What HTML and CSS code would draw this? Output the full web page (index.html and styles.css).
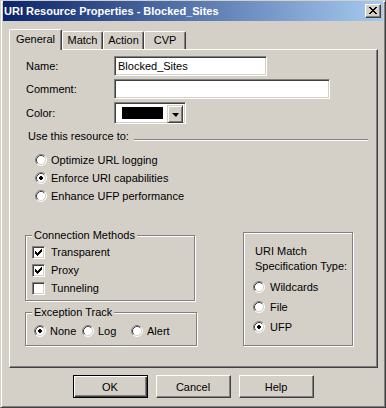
FILE: index.html
```html
<!DOCTYPE html>
<html>
<head>
<meta charset="utf-8">
<link rel="stylesheet" href="styles.css">
</head>
<body>
<svg class="defs" width="0" height="0" aria-hidden="true">
  <defs>
    <symbol id="radio" viewBox="0 0 12 12">
      <circle cx="6" cy="6" r="5" fill="#fff"/>
      <path d="M2.11 9.89 A5.5 5.5 0 0 1 9.89 2.11" fill="none" stroke="#808080" stroke-width="1"/>
      <path d="M2.82 9.18 A4.5 4.5 0 0 1 9.18 2.82" fill="none" stroke="#404040" stroke-width="1"/>
      <path d="M9.89 2.11 A5.5 5.5 0 0 1 2.11 9.89" fill="none" stroke="#ffffff" stroke-width="1"/>
      <path d="M9.18 2.82 A4.5 4.5 0 0 1 2.82 9.18" fill="none" stroke="#d4d0c8" stroke-width="1"/>
    </symbol>
    <symbol id="radio-on" viewBox="0 0 12 12">
      <use href="#radio"/>
      <path d="M5 4h2v1h1v2h-1v1h-2v-1h-1v-2h1z" fill="#000"/>
    </symbol>
    <symbol id="check" viewBox="0 0 13 13">
      <path d="M3 5h1v3h-1z M4 6h1v3h-1z M5 7h1v3h-1z M6 6h1v3h-1z M7 5h1v3h-1z M8 4h1v3h-1z M9 3h1v3h-1z" fill="#000"/>
    </symbol>
  </defs>
</svg>

<div class="window">
  <div class="titlebar">
    <span class="title">URI Resource Properties - Blocked_Sites</span>
    <span class="close">
      <svg width="8" height="7" viewBox="0 0 8 7"><path d="M0 0h2v1h1v1h2v-1h1v-1h2v1h-1v1h-1v1h-1v1h1v1h1v1h1v1h-2v-1h-1v-1h-2v1h-1v1h-2v-1h1v-1h1v-1h1v-1h-1v-1h-1v-1h-1z" fill="#000"/></svg>
    </span>
  </div>

  <div class="tabs">
    <div class="tab active w-general">General</div>
    <div class="tab w-match">Match</div>
    <div class="tab w-action">Action</div>
    <div class="tab w-cvp">CVP</div>
  </div>

  <div class="panel">
    <div class="fields">
      <span class="lbl">Name:</span>
      <div class="input w-name">Blocked_Sites</div>
      <span class="lbl">Comment:</span>
      <div class="input w-comment"></div>
      <span class="lbl">Color:</span>
      <div class="combo">
        <span class="swatch"></span>
        <span class="dd"><span class="arrow"></span></span>
      </div>
    </div>

    <div class="section-head">
      <span>Use this resource to:</span>
      <span class="rule"></span>
    </div>

    <div class="radio-list">
      <div class="opt"><svg class="radio"><use href="#radio"/></svg><span>Optimize URL logging</span></div>
      <div class="opt"><svg class="radio"><use href="#radio-on"/></svg><span>Enforce URI capabilities</span></div>
      <div class="opt"><svg class="radio"><use href="#radio"/></svg><span>Enhance UFP performance</span></div>
    </div>

    <div class="lower">
      <div class="left-col">
        <div class="group g-conn">
          <span class="legend">Connection Methods</span>
          <div class="chk"><span class="box"><svg class="tick"><use href="#check"/></svg></span><span>Transparent</span></div>
          <div class="chk"><span class="box"><svg class="tick"><use href="#check"/></svg></span><span>Proxy</span></div>
          <div class="chk"><span class="box"></span><span>Tunneling</span></div>
        </div>
        <div class="group g-exc">
          <span class="legend">Exception Track</span>
          <div class="inline-opts">
            <div class="opt w-none"><svg class="radio"><use href="#radio-on"/></svg><span>None</span></div>
            <div class="opt w-log"><svg class="radio"><use href="#radio"/></svg><span>Log</span></div>
            <div class="opt"><svg class="radio"><use href="#radio"/></svg><span>Alert</span></div>
          </div>
        </div>
      </div>
      <div class="group g-match">
        <div class="match-title">URI Match<br>Specification Type:</div>
        <div class="match-opts">
          <div class="opt"><svg class="radio"><use href="#radio"/></svg><span>Wildcards</span></div>
          <div class="opt"><svg class="radio"><use href="#radio"/></svg><span>File</span></div>
          <div class="opt"><svg class="radio"><use href="#radio-on"/></svg><span>UFP</span></div>
        </div>
      </div>
    </div>
  </div>

  <div class="buttons">
    <div class="btn default">OK</div>
    <div class="btn">Cancel</div>
    <div class="btn">Help</div>
  </div>
</div>
</body>
</html>
```

FILE: styles.css
```css
html, body {
  margin: 0;
  padding: 0;
  background: #d4d0c8;
}

.defs {
  position: absolute;
  width: 0;
  height: 0;
}

.window {
  width: 386px;
  height: 408px;
  box-sizing: border-box;
  background: #d4d0c8;
  border: 1px solid;
  border-color: #d4d0c8 #404040 #404040 #d4d0c8;
  box-shadow: inset 1px 1px #fff, inset -1px -1px #808080;
  padding: 0 2px 2px 2px;
  display: flex;
  flex-direction: column;
  font-family: "Liberation Sans", Arial, sans-serif;
  font-size: 11px;
  color: #000;
}

.titlebar {
  height: 20px;
  flex: none;
  background: linear-gradient(to right, #0a246a, #a6caf0);
  display: flex;
  align-items: center;
  justify-content: space-between;
  padding: 0 2px 0 1px;
}

.title {
  color: #fff;
  font-weight: bold;
  font-size: 11px;
  white-space: nowrap;
}

.close {
  width: 16px;
  height: 14px;
  box-sizing: border-box;
  background: #d4d0c8;
  border: 1px solid;
  border-color: #fff #404040 #404040 #fff;
  box-shadow: inset -1px -1px #808080;
  display: flex;
  align-items: center;
  justify-content: center;
  padding: 0 1px 1px 0;
}

.close svg {
  display: block;
}

.tabs {
  display: flex;
  align-items: flex-end;
  height: 20px;
  flex: none;
  margin: 8px 0 0 6px;
  position: relative;
  z-index: 1;
}

.tab {
  height: 18px;
  box-sizing: border-box;
  background: #d4d0c8;
  border-top: 1px solid #fff;
  border-left: 1px solid #fff;
  border-right: 1px solid #404040;
  box-shadow: inset -1px 0 #808080;
  border-top-left-radius: 2px;
  border-top-right-radius: 2px;
  display: flex;
  align-items: center;
  justify-content: center;
  padding-bottom: 1px;
}

.tab.active {
  height: 21px;
  margin-bottom: -1px;
  padding-bottom: 3px;
}

.w-general { width: 53px; }
.w-match { width: 41px; }
.w-action { width: 41px; }
.w-cvp { width: 42px; }

.panel {
  flex: none;
  height: 319px;
  box-sizing: border-box;
  margin: 0 5px 0 6px;
  border: 1px solid;
  border-color: #fff #404040 #404040 #fff;
  box-shadow: inset -1px -1px #808080;
}

.fields {
  display: grid;
  grid-template-columns: 88px auto;
  grid-template-rows: 20px 20px 22px;
  row-gap: 3px;
  align-items: center;
  justify-items: start;
  padding: 6px 0 0 16px;
}

.input {
  height: 20px;
  box-sizing: border-box;
  background: #fff;
  border: 1px solid;
  border-color: #808080 #fff #fff #808080;
  box-shadow: inset 1px 1px #404040, inset -1px -1px #d4d0c8;
  padding: 0 3px;
  display: flex;
  align-items: center;
  white-space: nowrap;
}

.w-name { width: 153px; }
.w-comment { width: 216px; }

.combo {
  width: 72px;
  height: 22px;
  box-sizing: border-box;
  background: #fff;
  border: 1px solid;
  border-color: #808080 #fff #fff #808080;
  box-shadow: inset 1px 1px #404040, inset -1px -1px #d4d0c8;
  padding: 2px;
  display: flex;
}

.swatch {
  width: 43px;
  height: 12px;
  margin: 2px 4px 0 5px;
  background: #000;
}

.dd {
  margin-left: auto;
  width: 16px;
  height: 18px;
  box-sizing: border-box;
  background: #d4d0c8;
  border: 1px solid;
  border-color: #d4d0c8 #404040 #404040 #d4d0c8;
  box-shadow: inset 1px 1px #fff, inset -1px -1px #808080;
  display: flex;
  align-items: center;
  justify-content: center;
}

.arrow {
  width: 0;
  height: 0;
  border-left: 4px solid transparent;
  border-right: 3px solid transparent;
  border-top: 4px solid #000;
  margin-top: 1px;
}

.section-head {
  display: flex;
  align-items: center;
  margin-top: 6px;
  padding: 0 9px 0 18px;
  line-height: 13px;
}

.rule {
  flex: 1;
  height: 0;
  border-top: 1px solid #808080;
  border-bottom: 1px solid #fff;
  margin: 6px 0 0 5px;
}

.radio-list {
  margin-top: 8px;
  padding-left: 25px;
}

.opt {
  display: flex;
  align-items: center;
  height: 18px;
  white-space: nowrap;
}

.radio {
  width: 12px;
  height: 12px;
  flex: none;
  margin-right: 4px;
}

.lower {
  display: flex;
  align-items: flex-start;
  margin-top: 27px;
  padding-left: 15px;
}

.left-col {
  width: 172px;
  margin-top: 3px;
  display: flex;
  flex-direction: column;
}

.group {
  position: relative;
  box-sizing: border-box;
  border: 1px solid #808080;
  box-shadow: inset 1px 1px #fff, 1px 1px #fff;
}

.legend {
  position: absolute;
  top: -7px;
  left: 6px;
  padding: 0 2px;
  background: #d4d0c8;
  line-height: 13px;
}

.g-conn {
  width: 170px;
  height: 66px;
  padding: 7px 0 0 6px;
}

.chk {
  display: flex;
  align-items: center;
  height: 18px;
}

.box {
  width: 13px;
  height: 13px;
  box-sizing: border-box;
  flex: none;
  background: #fff;
  border: 1px solid;
  border-color: #808080 #fff #fff #808080;
  box-shadow: inset 1px 1px #404040, inset -1px -1px #d4d0c8;
  margin-right: 6px;
  position: relative;
}

.tick {
  position: absolute;
  left: -1px;
  top: -1px;
  width: 13px;
  height: 13px;
}

.g-exc {
  width: 172px;
  height: 34px;
  margin-top: 11px;
  padding: 9px 0 0 8px;
}

.inline-opts {
  display: flex;
}

.w-none { width: 48px; }
.w-log { width: 49px; }

.g-match {
  width: 110px;
  height: 114px;
  margin-left: 46px;
  padding: 11px 0 0 9px;
}

.match-title {
  line-height: 15px;
  padding-left: 2px;
}

.match-opts {
  margin-top: 3px;
}

.match-opts .opt {
  height: 20px;
}

.match-opts .radio {
  margin-right: 5px;
}

.buttons {
  display: flex;
  justify-content: center;
  gap: 8px;
  margin-top: 7px;
}

.btn {
  width: 75px;
  height: 23px;
  box-sizing: border-box;
  background: #d4d0c8;
  border: 1px solid;
  border-color: #fff #404040 #404040 #fff;
  box-shadow: inset -1px -1px #808080;
  display: flex;
  align-items: center;
  justify-content: center;
}

.btn.default {
  border-color: #000;
  box-shadow: inset 1px 1px #fff, inset -1px -1px #404040, inset -2px -2px #808080;
}
```
